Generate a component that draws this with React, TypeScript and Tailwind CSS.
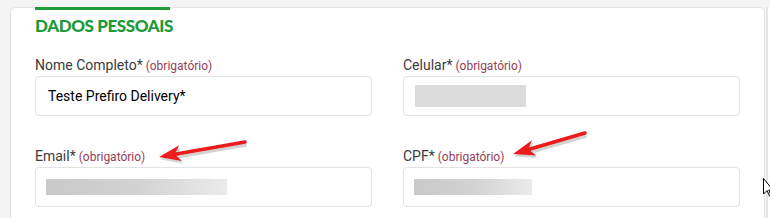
import React from 'react';

interface FieldProps {
  label: string;
  value?: string;
  blur?: { width: number; gradient?: boolean };
}

function Field({ label, value, blur }: FieldProps) {
  return (
    <div className="flex flex-col">
      <div className="h-[22px] flex items-end pb-[4px] leading-none">
        <span className="text-[14px] text-[#3b3b3b]">{label}*</span>
        <span className="ml-[3px] text-[12px] text-[#95405a]">(obrigatório)</span>
      </div>
      <div className="h-[40px] rounded-[4px] border border-[#e2e2e2] bg-white flex items-center px-[12px]">
        {value && <span className="text-[14px] text-black">{value}</span>}
        {blur && (
          <div
            className={
              blur.gradient
                ? 'h-[16px] -ml-[2px] bg-gradient-to-r from-[#c9c9c9] via-[#d2d2d2] to-[#ebebeb]'
                : 'h-[22px] -ml-[1px] bg-[#dcdcdc]'
            }
            style={{ width: blur.width }}
          />
        )}
      </div>
    </div>
  );
}

function Arrow({ x1, y1, x2, y2 }: { x1: number; y1: number; x2: number; y2: number }) {
  const dx = x2 - x1;
  const dy = y2 - y1;
  const len = Math.hypot(dx, dy);
  const ux = dx / len;
  const uy = dy / len;
  const bx = x2 - ux * 22;
  const by = y2 - uy * 22;
  const px = -uy * 8;
  const py = ux * 8;
  const sx = x2 - ux * 16;
  const sy = y2 - uy * 16;
  return (
    <g>
      <g opacity="0.25" transform="translate(1.5 2.5)">
        <line x1={x1} y1={y1} x2={sx} y2={sy} stroke="#555" strokeWidth="4" />
        <polygon points={`${x2},${y2} ${bx + px},${by + py} ${sx},${sy} ${bx - px},${by - py}`} fill="#555" />
      </g>
      <line x1={x1} y1={y1} x2={sx} y2={sy} stroke="#ec1c1c" strokeWidth="3.5" strokeLinecap="round" />
      <polygon points={`${x2},${y2} ${bx + px},${by + py} ${sx},${sy} ${bx - px},${by - py}`} fill="#ec1c1c" />
    </g>
  );
}

export default function App() {
  return (
    <div className="relative w-[770px] h-[218px] overflow-hidden bg-[#f4f4f4] font-['Roboto',sans-serif]">
      <div className="flex h-full pt-[7px] pl-[10px]">
        <div className="w-[755px] h-[240px] rounded-[5px] border border-[#e3e3e3] bg-white px-[24px]">
          <div className="w-[135px] h-[3px] -mt-px bg-[#1f9d3b]" />
          <h2 className="mt-[4px] text-[17px] leading-[24px] font-black text-[#1b9a37] font-['Lato',sans-serif] tracking-[-0.4px]">
            DADOS PESSOAIS
          </h2>
          <div className="mt-[16px] grid grid-cols-2 gap-x-[31px] gap-y-[29px]">
            <Field label="Nome Completo" value="Teste Prefiro Delivery*" />
            <Field label="Celular" blur={{ width: 111 }} />
            <Field label="Email" blur={{ width: 181, gradient: true }} />
            <Field label="CPF" blur={{ width: 118, gradient: true }} />
          </div>
        </div>
        <div className="ml-[1px] w-[2px] h-full bg-[#e6e6e6]" />
        <div className="flex-1 h-full bg-white" />
      </div>

      <svg className="absolute inset-0 pointer-events-none" width="770" height="218">
        <Arrow x1={245} y1={142} x2={159} y2={157} />
        <Arrow x1={585} y1={133} x2={513} y2={154} />
        <path d="M763.5 178.5 L763.5 194 L767 190.5 L769.5 196 L771 195.5 L768.8 190 L773 190 Z" fill="white" stroke="black" strokeWidth="1" />
      </svg>
    </div>
  );
}
